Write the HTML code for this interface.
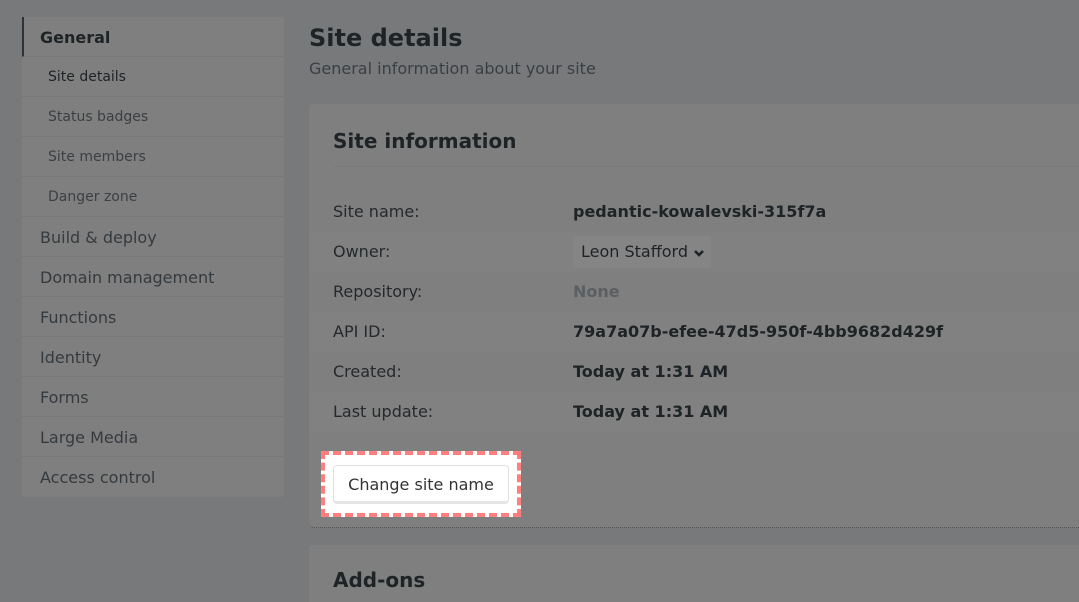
<!DOCTYPE html>
<html style="overflow:hidden;height:602px"><head><meta charset="utf-8"><style>
*{box-sizing:border-box;margin:0;padding:0}
body{width:1079px;height:602px;overflow:hidden;background:#78797b;font-family:"DejaVu Sans","Liberation Sans",sans-serif;color:#1e2326;position:relative}
.side{position:absolute;left:22px;top:17px;width:262px;background:#7f7f7f;border-radius:3px}
.side div{height:40px;line-height:41px;border-bottom:1px solid #787879;font-size:16px;padding-left:18px;color:#353a3e}
.side .g{font-weight:bold;color:#1e2326;border-left:2px solid #2e3236;padding-left:16px}
.side .s{font-size:14px;padding-left:26px;color:#3b4044}
.side .s.a{color:#1e2326}
h1{position:absolute;left:309px;top:24px;font-size:24px;font-weight:bold}
.sub{position:absolute;left:309px;top:59px;font-size:16px;color:#3a3f43}
.card{position:absolute;left:309px;top:104px;width:770px;height:424px;background:#7f7f7f;border-radius:4px 0 0 4px;border-bottom:1px dotted #555}
.card h2{position:absolute;left:24px;top:25px;font-size:20px;font-weight:bold}
.hr{position:absolute;left:24px;right:0;top:62px;border-top:1px solid #7a7a7a}
.row{position:absolute;left:0;right:0;height:40px;line-height:40px;font-size:16px}
.row.z{background:#818181}
.row .l{position:absolute;left:24px;color:#24292c}
.row .v{position:absolute;left:264px;font-weight:bold}
.owner{position:absolute;left:264px;top:4px;height:32px;line-height:32px;padding:0 6px 0 8px;background:#858585;font-weight:normal}
.btnw{position:absolute;left:12px;top:347px;width:200px;height:66px;border:4px dashed #ff7e7e;background:#fff}
.btn{position:absolute;left:8px;top:10px;width:176px;height:39px;border:1px solid #e2e2e2;border-bottom:3px solid #e4e4e4;border-radius:4px;text-align:center;line-height:37px;font-size:16px;color:#333}
.card2{position:absolute;left:309px;top:545px;width:770px;height:57px;background:#7f7f7f;border-radius:4px 0 0 0;overflow:hidden}
.card2 h2{position:absolute;left:24px;top:23px;font-size:20px;font-weight:bold}
</style></head><body>
<div class="side">
<div class="g">General</div>
<div class="s a">Site details</div>
<div class="s">Status badges</div>
<div class="s">Site members</div>
<div class="s">Danger zone</div>
<div>Build &amp; deploy</div>
<div>Domain management</div>
<div>Functions</div>
<div>Identity</div>
<div>Forms</div>
<div>Large Media</div>
<div style="border-bottom:none">Access control</div>
</div>
<h1>Site details</h1>
<div class="sub">General information about your site</div>
<div class="card">
<h2>Site information</h2>
<div class="hr"></div>
<div class="row" style="top:88px"><span class="l">Site name:</span><span class="v">pedantic-kowalevski-315f7a</span></div>
<div class="row z" style="top:128px"><span class="l">Owner:</span><span class="owner">Leon Stafford <svg width="12" height="10" viewBox="0 0 12 10" style="vertical-align:middle"><path d="M2 3l4 4 4-4" fill="none" stroke="#1e2326" stroke-width="2.6"/></svg></span></div>
<div class="row" style="top:168px"><span class="l">Repository:</span><span class="v" style="color:#5c5f62">None</span></div>
<div class="row z" style="top:208px"><span class="l">API ID:</span><span class="v">79a7a07b-efee-47d5-950f-4bb9682d429f</span></div>
<div class="row" style="top:248px"><span class="l">Created:</span><span class="v">Today at 1:31 AM</span></div>
<div class="row z" style="top:288px"><span class="l">Last update:</span><span class="v">Today at 1:31 AM</span></div>
<div class="btnw"><div class="btn">Change site name</div></div>
</div>
<div class="card2"><h2>Add-ons</h2></div>
</body></html>
